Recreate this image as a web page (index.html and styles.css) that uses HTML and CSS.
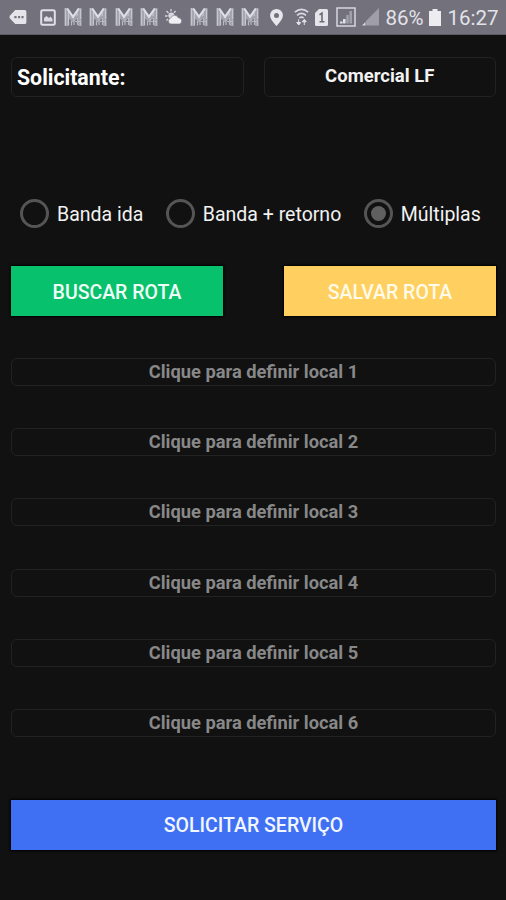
FILE: index.html
```html
<!DOCTYPE html>
<html lang="pt-BR">
<head>
<meta charset="utf-8">
<title>Solicitar serviço</title>
<link rel="stylesheet" href="styles.css">
</head>
<body>
<svg class="defs" width="0" height="0">
  <symbol id="m" viewBox="0 0 18 20">
    <path d="M.5 1h3.200L9 8.600 14.300 1h3.200v18h-3.400V10.500L9 15.500 4 10.500V19H.5z" fill="#a3a3ae"/>
    <path d="M1.500 1.300V18.500M4.500 5v13.500M13 5v4M16.500 2v10" stroke="#c6c6d0" stroke-width="1.200"/>
    <path d="M3.200 1.500 9 9.800 14.800 1.500" fill="none" stroke="#dedee6" stroke-width="2.100"/>
    <path d="M7.500 14v4.500M10 12v6M13.500 11v7M16.500 13v5.500M11 14.500h6" stroke="#b9b9c4" stroke-width="1.200"/>
  </symbol>
</svg>
<header class="status">
  <svg class="tag" viewBox="0 0 18 15"><path d="M6 0h10q2 0 2 2v11q0 2-2 2H6L0 8.500v-2z" fill="#e4e4ea"/><path d="M5 6.300h2.500v2.500H5zM9 6.300h2.300v2.500H9zM12.700 6.300H15v2.500h-2.300z" fill="#777680"/></svg>
  <svg class="photo" viewBox="0 0 16 17"><rect x="1.200" y="1.200" width="13.600" height="14.600" rx="1.500" fill="none" stroke="#e0e0e7" stroke-width="2"/><path d="M4 12.500V9l2.500-2L9 9l1.500-1.500L12.500 10v2.500z" fill="#dadae2"/></svg>
  <svg class="m"><use href="#m"/></svg><svg class="m"><use href="#m"/></svg><svg class="m"><use href="#m"/></svg><svg class="m"><use href="#m"/></svg>
  <svg class="weather" viewBox="0 0 18 16"><path d="M6 0v2.500M1.500 2l2 2M0 7h2.500M10.500 2 9 3.700M1.500 11.500 3 10" stroke="#d7d7df" stroke-width="1.300"/><circle cx="6.300" cy="6.500" r="3" fill="#d7d7df"/><path d="M6 15a3 3 0 0 1-.3-5.900 4 4 0 0 1 7.500-.3A3.200 3.200 0 0 1 14.500 15z" fill="#f0f0f4" stroke="#777680" stroke-width=".6"/></svg>
  <svg class="m"><use href="#m"/></svg><svg class="m"><use href="#m"/></svg><svg class="m"><use href="#m"/></svg>
  <svg class="pin" viewBox="0 0 13 17"><path d="M6.500 0A6.400 6.400 0 0 0 .1 6.400C.1 10.500 6.500 17 6.500 17s6.400-6.500 6.400-10.600A6.400 6.400 0 0 0 6.500 0z" fill="#e6e6ec"/><circle cx="6.500" cy="6.400" r="2.500" fill="#72717c"/></svg>
  <svg class="wifi" viewBox="0 0 15 18"><path d="M.8 4.200q6.700-5.800 13.400 0M3 7.300q4.500-3.800 9 0M5.300 10q2.200-1.800 4.400 0" fill="none" stroke="#d9d9e1" stroke-width="1.600"/><path d="M4.700 11.300v5M2.700 14.500l2 2.500 2-2.500zM10.300 17v-5M8.300 13.800l2-2.500 2 2.500z" fill="#e2e2e9" stroke="#e2e2e9" stroke-width="1"/></svg>
  <svg class="sim" viewBox="0 0 13 17"><path d="M4 0h7.500q1.500 0 1.500 1.500v14q0 1.500-1.500 1.500h-10Q0 17 0 15.500V4z" fill="#e4e4ea"/><path d="M4.500 5.800 7 4v8.500M4.500 12.800h5" fill="none" stroke="#6d6c77" stroke-width="1.600"/></svg>
  <svg class="boxed" viewBox="0 0 20 20"><rect x="1" y="1" width="18" height="18" fill="none" stroke="#d6d6de" stroke-width="1.500"/><path d="M5.300 16.500v-2M8.300 16.500V12" stroke="#e4e4ea" stroke-width="2.500"/><path d="M11.500 16.500V8M14.700 16.500V4" stroke="#a2a2ad" stroke-width="2.500"/></svg>
  <svg class="signal" viewBox="0 0 17 18"><path d="M17 0v17.500H4V13z" fill="#a09fa9"/><path d="M0 17.500 3.500 14v3.500z" fill="#dadae1"/></svg>
  <span class="percent">86%</span>
  <svg class="battery" viewBox="0 0 12 17"><path d="M3.500 0h5v2H12v15H0V2h3.500z" fill="#ececf1"/></svg>
  <span class="clock">16:27</span>
</header>
<main class="page">
  <section class="requester">
    <div class="field label">Solicitante:</div>
    <div class="field value">Comercial LF</div>
  </section>
  <section class="options">
    <label class="option"><span class="radio"></span><span>Banda ida</span></label>
    <label class="option"><span class="radio"></span><span>Banda + retorno</span></label>
    <label class="option"><span class="radio checked"></span><span>Múltiplas</span></label>
  </section>
  <section class="actions">
    <button class="button search">BUSCAR ROTA</button>
    <button class="button save">SALVAR ROTA</button>
  </section>
  <section class="places">
    <div class="place">Clique para definir local 1</div>
    <div class="place">Clique para definir local 2</div>
    <div class="place">Clique para definir local 3</div>
    <div class="place">Clique para definir local 4</div>
    <div class="place">Clique para definir local 5</div>
    <div class="place">Clique para definir local 6</div>
  </section>
  <button class="button submit">SOLICITAR SERVIÇO</button>
</main>
</body>
</html>
```

FILE: styles.css
```css
* { box-sizing: border-box; }
body {
  margin: 0;
  height: 900px;
  overflow: hidden;
  background: #111;
  color: #f2f2f2;
  font-family: Roboto, sans-serif;
}
.defs { display: block; }
.status {
  display: flex;
  align-items: center;
  height: 35px;
  padding-left: 9px;
  background: #72717c;
  border-bottom: 1px solid #5d5c65;
  color: #e3e3ea;
  font-size: 20.500px;
  white-space: nowrap;
}
.status svg { flex: none; }
.status span { padding-top: 1px; margin-left: -1px; }
.tag { width: 18px; height: 14px; margin-right: 13px; }
.photo { width: 16px; height: 17px; margin-right: 8px; }
.m { width: 18px; height: 20px; margin-right: 7.300px; }
.weather { width: 18px; height: 16px; margin-right: 7.300px; }
.pin { width: 13px; height: 17px; margin: 0 11px 0 4px; }
.wifi { width: 15px; height: 18px; margin-right: 6px; }
.sim { width: 13px; height: 17px; margin-right: 8px; }
.boxed { width: 20px; height: 20px; margin-right: 6px; }
.signal { width: 17px; height: 18px; margin-right: 7px; }
.percent { width: 44px; }
.battery { width: 12px; height: 17px; margin-right: 7px; }
.page { padding: 22px 10px 0 11px; }
.requester {
  display: grid;
  grid-template-columns: 1fr 1fr;
  gap: 20px;
}
.field, .place {
  border: 1px solid #222;
  border-radius: 6px;
  font-weight: 700;
  white-space: nowrap;
}
.field { height: 40px; line-height: 39px; }
.label { padding-left: 5px; color: #fff; font-size: 21.300px; }
.value { font-size: 18.500px; line-height: 37px; text-align: center; }
.options {
  display: flex;
  height: 30px;
  margin: 102px 0 0 9px;
  font-size: 19.500px;
  white-space: nowrap;
}
.option { display: flex; align-items: center; gap: 8px; margin-right: 22.500px; }
.radio {
  display: grid;
  place-items: center;
  width: 29px;
  height: 29px;
  margin-top: -1px;
  border: 3px solid #555;
  border-radius: 50%;
}
.checked::after {
  content: "";
  width: 15px;
  height: 15px;
  border-radius: 50%;
  background: #606060;
}
.actions {
  display: flex;
  justify-content: space-between;
  margin-top: 37px;
}
.button {
  height: 50px;
  padding: 2px 0 0;
  border: 0;
  color: #f0fff8;
  font: 500 19.500px Roboto, sans-serif;
  box-shadow: 0 0 2px 1px #000;
}
.search { width: 212px; background: #08c16c; }
.save { width: 212px; background: #ffcf60; color: #fffbea; }
.places { display: grid; gap: 42.200px; margin-top: 42px; }
.place {
  height: 28px;
  color: #888;
  font-size: 18.300px;
  line-height: 26px;
  text-align: center;
}
.submit {
  display: block;
  width: 100%;
  margin-top: 63px;
  background: #3f70f4;
  color: #f2f6ff;
}
```
